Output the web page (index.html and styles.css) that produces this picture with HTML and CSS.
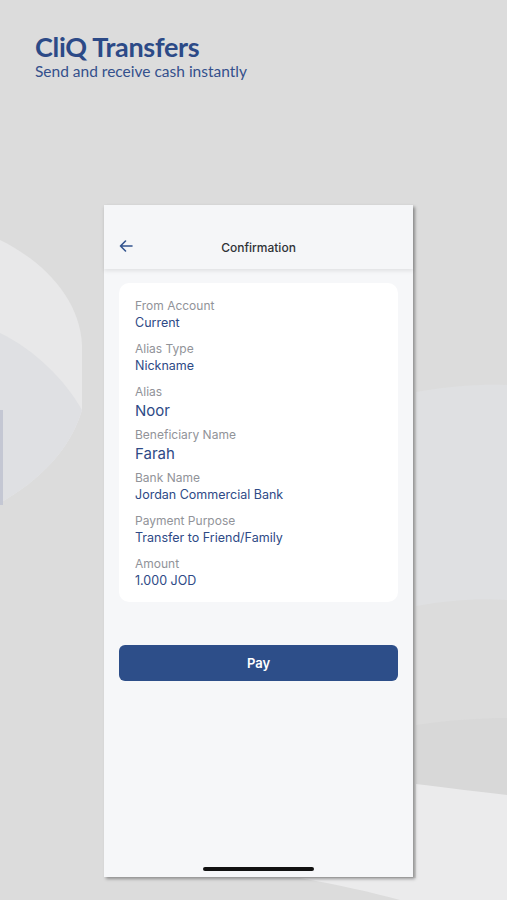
FILE: index.html
```html
<!DOCTYPE html>
<html>
<head>
<meta charset="utf-8">
<link rel="stylesheet" href="styles.css">
</head>
<body>
<svg class="bg" width="507" height="900" viewBox="0 0 507 900" aria-hidden="true">
  <path d="M0 240 C45 262 80 300 82 345 L82 410 C70 450 40 480 0 503 Z" fill="#e8e8e9"/>
  <path d="M0 333 C35 350 65 380 82 410 C70 450 40 480 0 503 Z" fill="#dfe0e3"/>
  <rect x="0" y="410" width="3" height="95" fill="#c4c7d3"/>
  <path d="M416 392 C450 386 480 384 507 385 L507 600 C480 598 450 600 416 606 Z" fill="#dfe0e2"/>
  <path d="M416 725 C450 720 480 718 507 718 L507 900 L416 900 Z" fill="#d8d8d8"/>
  <path d="M416 784 C450 788 480 792 507 795 L507 900 L416 900 Z" fill="#ebebec"/>
  <path d="M300 878 C340 885 370 892 400 900 L507 900 L507 878 Z" fill="#ebebec"/>
</svg>
<header class="promo">
  <h1>CliQ Transfers</h1>
  <p>Send and receive cash instantly</p>
</header>
<div class="phone">
  <div class="topbar">
    <svg class="back" width="14" height="12" viewBox="0 0 14 12"><path d="M13 6 H1.5 M6.5 1 L1.5 6 L6.5 11" fill="none" stroke="#33548f" stroke-width="1.6" stroke-linecap="round" stroke-linejoin="round"/></svg>
    <span class="title">Confirmation</span>
  </div>
  <div class="content">
    <div class="card">
      <div class="item"><div class="label">From Account</div><div class="value">Current</div></div>
      <div class="item"><div class="label">Alias Type</div><div class="value">Nickname</div></div>
      <div class="item"><div class="label">Alias</div><div class="value big">Noor</div></div>
      <div class="item"><div class="label">Beneficiary Name</div><div class="value big">Farah</div></div>
      <div class="item"><div class="label">Bank Name</div><div class="value">Jordan Commercial Bank</div></div>
      <div class="item"><div class="label">Payment Purpose</div><div class="value">Transfer to Friend/Family</div></div>
      <div class="item"><div class="label">Amount</div><div class="value">1.000 JOD</div></div>
    </div>
    <button class="pay">Pay</button>
    <div class="home"></div>
  </div>
</div>
</body>
</html>
```

FILE: styles.css
```css
* { box-sizing: border-box; }
html, body { margin: 0; padding: 0; }
body {
  width: 507px;
  height: 900px;
  background: #dcdcdc;
  position: relative;
  overflow: hidden;
  font-family: Inter, "Noto Sans", sans-serif;
}
.bg { position: absolute; left: 0; top: 0; z-index: 0; }
.promo {
  position: relative;
  z-index: 1;
  padding: 32px 0 0 35px;
  height: 205px;
}
.promo h1 {
  margin: 0;
  font-family: Lato, sans-serif;
  font-weight: 700;
  font-size: 27px;
  line-height: 30px;
  letter-spacing: -0.3px;
  color: #2c4a87;
}
.promo p {
  margin: 0;
  font-family: Lato, sans-serif;
  font-size: 15.5px;
  line-height: 18px;
  color: #34508c;
}
.phone {
  position: relative;
  z-index: 1;
  margin-left: 104px;
  width: 309px;
  height: 672px;
  background: #f6f7f9;
  box-shadow: 2px 2px 3px rgba(0,0,0,0.35);
  display: flex;
  flex-direction: column;
}
.topbar {
  height: 64px;
  background: #f5f6f8;
  display: flex;
  align-items: flex-end;
  padding: 0 15px 14px;
  position: relative;
  box-shadow: 0 2px 4px rgba(0,0,0,0.09);
  z-index: 2;
}
.back { margin-bottom: 3px; }
.title {
  position: absolute;
  left: 0; right: 0;
  bottom: 13px;
  text-align: center;
  font-size: 12px;
  font-weight: 500;
  color: #2f3237;
  line-height: 16px;
}
.content {
  flex: 1;
  padding: 14px 15px 0;
  display: flex;
  flex-direction: column;
}
.card {
  background: #fff;
  border-radius: 10px;
  padding: 15px 16px 12px;
  display: flex;
  flex-direction: column;
  gap: 9px;
}
.label {
  font-size: 12px;
  line-height: 16px;
  color: #919399;
}
.value {
  font-size: 12.5px;
  line-height: 18px;
  color: #2e4a86;
}
.value.big {
  font-size: 15px;
  padding-top: 2px;
  margin-bottom: -2px;
}
.pay {
  margin-top: 43px;
  height: 36px;
  border: none;
  border-radius: 6px;
  background: #2d4e89;
  color: #fff;
  font-family: Inter, sans-serif;
  font-weight: 600;
  font-size: 13px;
}
.home {
  margin: auto auto 6px;
  width: 111px;
  height: 4px;
  border-radius: 2px;
  background: #111;
}
```
